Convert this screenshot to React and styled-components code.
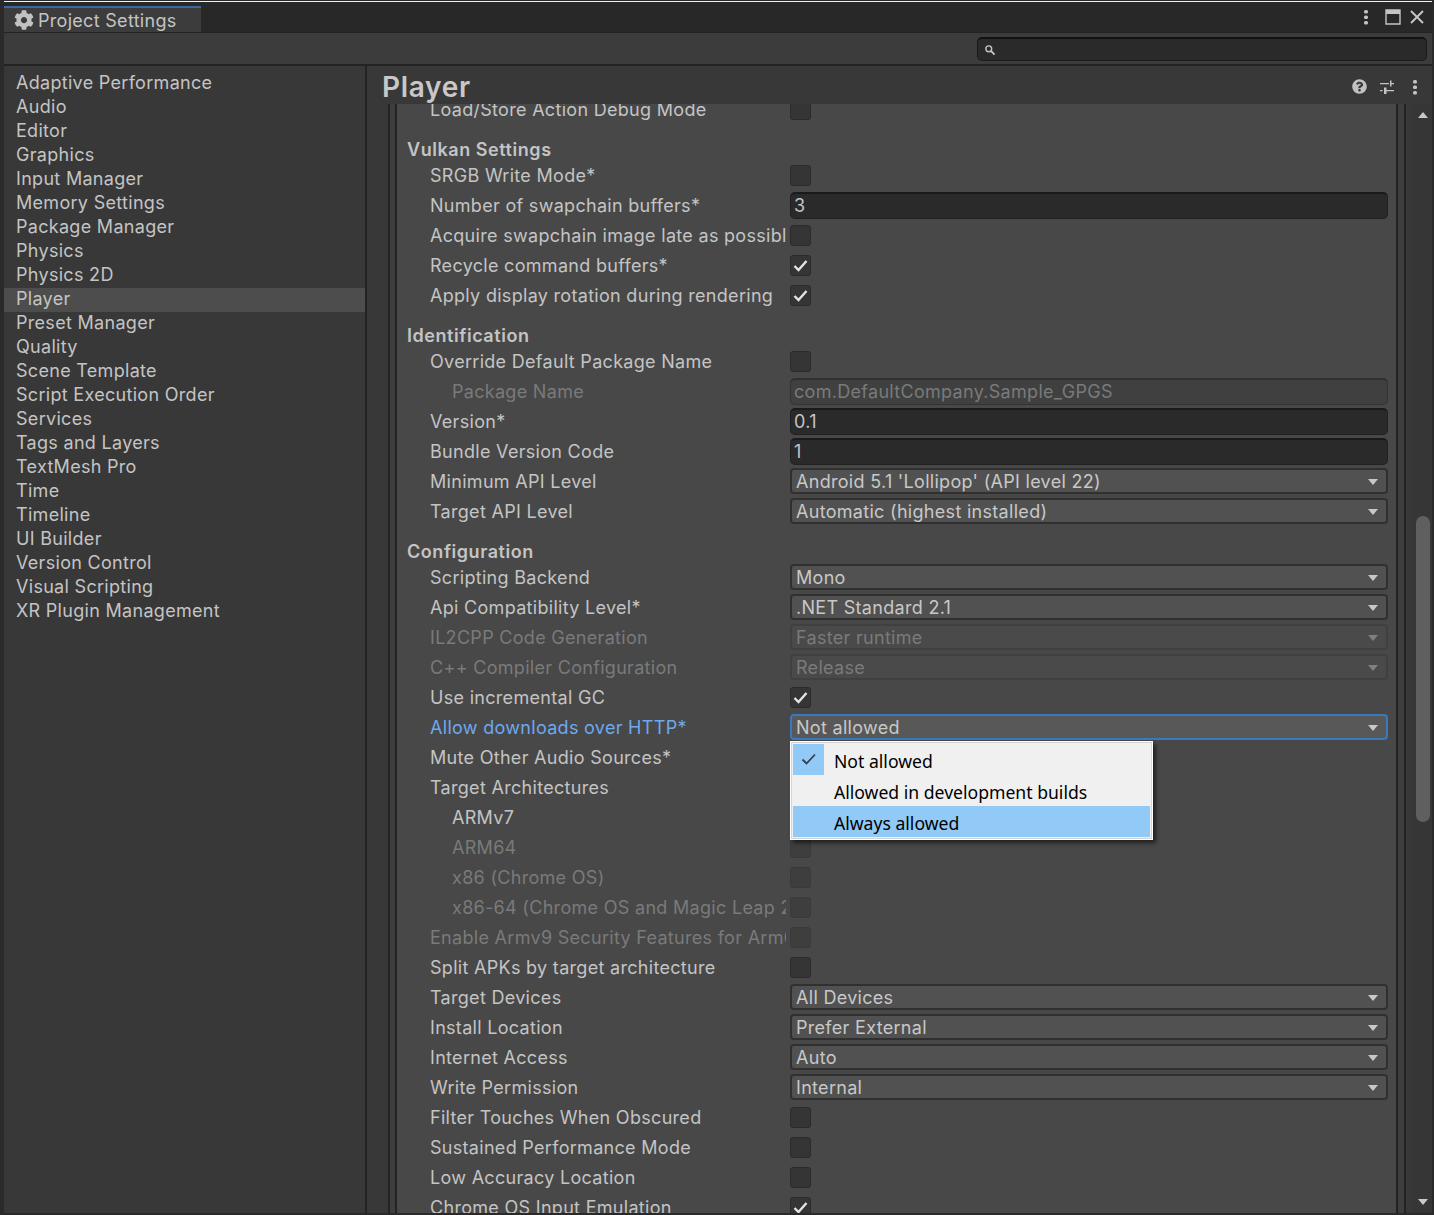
import React from "react";
import styled, { createGlobalStyle } from "styled-components";
import { FaCog, FaQuestionCircle } from "react-icons/fa";

const Global = createGlobalStyle`
  html, body { margin: 0; padding: 0; background: #2a2a2a; }
  body { font-family: Inter, "Liberation Sans", sans-serif; }
`;

const Page = styled.div`
  width: 1434px; height: 1215px; overflow: hidden; background: #2a2a2a;
  display: flex; flex-direction: column; padding: 1px 2px 2px 4px; box-sizing: border-box;
  color: #c4c4c4; font-size: 18px; letter-spacing: 0.3px;
`;
const TopLine = styled.div`height: 1px; background: #f4f4f4; flex: none;`;
const TabStrip = styled.div`
  height: 31px; flex: none; background: #282828; display: flex; align-items: flex-end;
  justify-content: space-between; border-bottom: 1px solid #232323; box-sizing: border-box;
`;
const Tab = styled.div`
  width: 197px; height: 26px; background: #3c3c3c; border-top: 2px solid #3a6a9e; box-sizing: border-box;
  display: flex; align-items: center; gap: 4px; padding: 0 0 0 10px; font-size: 18px; color: #c4c4c4;
  svg { flex: none; color: #c2c2c2; }
`;
const WinIcons = styled.div`
  display: flex; align-items: center; height: 30px; gap: 0; padding-right: 8px; align-self: flex-start;
`;
const Toolbar = styled.div`
  height: 33px; flex: none; background: #3c3c3c; border-bottom: 2px solid #232323; box-sizing: border-box;
  display: flex; justify-content: flex-end; align-items: flex-start; padding: 4px 5px 0 0;
`;
const Search = styled.div`
  width: 450px; height: 24px; box-sizing: border-box; background: #2a2a2a; border: 1px solid #1c1c1c; border-top: 2px solid #121212;
  border-radius: 5px; display: flex; align-items: center; padding-left: 6px;
`;
const Main = styled.div`flex: 1; min-height: 0; display: flex;`;
const Sidebar = styled.nav`
  width: 361px; flex: none; background: #383838; padding-top: 6px; border-right: 2px solid #232323;
`;
const SideItem = styled.div`
  height: 24px; line-height: 22px; padding-left: 12px;
  background: ${p => (p.$active ? "#4d4d4d" : "transparent")};
`;
const Content = styled.div`flex: 1; min-width: 0; display: flex; flex-direction: column; background: #383838;`;
const Header = styled.header`
  height: 38px; flex: none; display: flex; align-items: center; justify-content: space-between;
  padding: 3px 14px 0 15px; box-sizing: border-box; background: #383838; position: relative; z-index: 2;
`;
const Title = styled.h1`margin: 0; font-size: 28px; font-weight: 600; color: #c8c8c8; letter-spacing: 0.7px; line-height: 34px;`;
const HeadIcons = styled.div`display: flex; align-items: center; gap: 13px; color: #c2c2c2;`;
const Scroller = styled.div`flex: 1; min-height: 0; display: flex;`;
const Outer = styled.div`
  flex: 1; min-width: 0; overflow: hidden; display: flex; padding: 0 6px 0 21px; background: #383838;
`;
const Frame = styled.div`
  flex: 1; min-width: 0; background: #3e3e3e; border-left: 2px solid #232323; border-right: 2px solid #232323;
  padding: 0 6px 0 5px; display: flex;
`;
const Inner = styled.div`
  flex: 1; min-width: 0; background: #484848; border-left: 2px solid #232323; border-right: 2px solid #232323;
  overflow: hidden;
`;
const Stack = styled.div`margin-top: -10px; padding: 0 8px 0 10px;`;
const SectionTitle = styled.div`
  height: 21px; line-height: 21px; padding-top: 15px; font-weight: 600; color: #c4c4c4; letter-spacing: 0.55px;
`;
const Row = styled.div`height: 30px; display: flex; align-items: center; padding-left: 23px;`;
const Label = styled.div`
  width: 356px; flex: none; white-space: nowrap; overflow: hidden; box-sizing: border-box;
  padding-left: ${p => (p.$sub ? "22px" : "0")};
  color: ${p => (p.$dim ? "#7a7a7a" : p.$blue ? "#6da9ef" : "#c4c4c4")};
`;
const Control = styled.div`
  margin-left: 4px; flex: 1; min-width: 0; position: relative; display: flex; align-items: center;
`;
const Check = styled.div`
  width: 21px; height: 21px; box-sizing: border-box; border-radius: 3px; background: ${p => (p.$dim ? "#3e3e3e" : "#353535")};
  border: 1px solid ${p => (p.$dim ? "#3a3a3a" : "#2b2b2b")}; display: flex; align-items: center; justify-content: center;
`;
const Field = styled.div`
  flex: 1; height: 27px; box-sizing: border-box; border-radius: 5px; padding-left: 3px; line-height: 24px; white-space: nowrap;
  background: ${p => (p.$dim ? "#404040" : "#2a2a2a")};
  border: 1px solid ${p => (p.$dim ? "#333333" : "#212121")};
  border-top: 2px solid ${p => (p.$dim ? "#303030" : "#1a1a1a")};
  color: ${p => (p.$dim ? "#7a7a7a" : "#c4c4c4")};
`;
const Select = styled.div`
  flex: 1; height: 26px; box-sizing: border-box; border-radius: 4px; padding: 0 8px 0 4px; display: flex; align-items: center; justify-content: space-between;
  background: ${p => (p.$focus ? "#585858" : p.$dim ? "#4a4a4a" : "#515151")};
  border: 2px solid ${p => (p.$focus ? "#3a79bb" : p.$dim ? "#404040" : "#303030")};
  color: ${p => (p.$dim ? "#7a7a7a" : "#c8c8c8")};
`;
const Arrow = styled.span`
  margin-top: 2px; width: 0; height: 0; border-left: 5.5px solid transparent; border-right: 5.5px solid transparent;
  border-top: 6px solid ${p => (p.$dim ? "#7f7f7f" : "#c8c8c8")};
`;
const Menu = styled.div`
  position: absolute; left: 0; top: 27px; width: 363px; height: 99px; box-sizing: border-box; z-index: 5;
  background: #f0f0f0; border: 1px solid #ffffff; outline: 1px solid #d4d4d4; outline-offset: -2px;
  padding: 2px; box-shadow: 3px 3px 4px rgba(0,0,0,0.55);
  font-family: "Noto Sans", sans-serif; font-size: 17.6px; letter-spacing: 0; color: #000;
`;
const MenuItem = styled.div`
  height: 31px; display: flex; align-items: center; white-space: nowrap;
  background: ${p => (p.$hot ? "#91c9f7" : "transparent")};
`;
const MenuText = styled.span`padding-top: 3px;`;
const MenuMark = styled.div`
  width: 31px; height: 31px; flex: none; margin-right: 10px; display: flex; align-items: center; justify-content: center;
  background: ${p => (p.$on ? "#91c9f7" : "transparent")};
`;
const Bar = styled.div`
  width: 20px; flex: none; background: #363636; display: flex; flex-direction: column; align-items: flex-start; position: relative; z-index: 2;
`;
const Up = styled.span`
  margin: 8px 0 0 6px; width: 0; height: 0; border-left: 5px solid transparent; border-right: 5px solid transparent; border-bottom: 6px solid #c8c8c8;
`;
const Thumb = styled.div`margin: 398px 0 0 4px; width: 14px; height: 306px; border-radius: 7px; background: #5f5f5f;`;
const Down = styled.span`
  margin: auto 0 8px 6px; width: 0; height: 0; border-left: 5px solid transparent; border-right: 5px solid transparent; border-top: 6px solid #c8c8c8;
`;

const sideItems = ["Adaptive Performance","Audio","Editor","Graphics","Input Manager","Memory Settings","Package Manager","Physics","Physics 2D","Player","Preset Manager","Quality","Scene Template","Script Execution Order","Services","Tags and Layers","TextMesh Pro","Time","Timeline","UI Builder","Version Control","Visual Scripting","XR Plugin Management"];

const C = (label, on = false, o = {}) => ({ label, kind: "check", on, ...o });
const S = (label, value, o = {}) => ({ label, kind: "select", value, ...o });
const F = (label, value, o = {}) => ({ label, kind: "field", value, ...o });
const T = title => ({ title });

const rows = [
  C("Load/Store Action Debug Mode"),
  T("Vulkan Settings"),
  C("SRGB Write Mode*"),
  F("Number of swapchain buffers*", "3"),
  C("Acquire swapchain image late as possibl"),
  C("Recycle command buffers*", true),
  C("Apply display rotation during rendering", true),
  T("Identification"),
  C("Override Default Package Name"),
  F("Package Name", "com.DefaultCompany.Sample_GPGS", { sub: true, dim: true }),
  F("Version*", "0.1"),
  F("Bundle Version Code", "1"),
  S("Minimum API Level", "Android 5.1 'Lollipop' (API level 22)"),
  S("Target API Level", "Automatic (highest installed)"),
  T("Configuration"),
  S("Scripting Backend", "Mono"),
  S("Api Compatibility Level*", ".NET Standard 2.1"),
  S("IL2CPP Code Generation", "Faster runtime", { dim: true }),
  S("C++ Compiler Configuration", "Release", { dim: true }),
  C("Use incremental GC", true),
  S("Allow downloads over HTTP*", "Not allowed", { blue: true, focus: true, menu: true }),
  C("Mute Other Audio Sources*"),
  { label: "Target Architectures", kind: "none" },
  C("ARMv7", false, { sub: true }),
  C("ARM64", false, { sub: true, dim: true }),
  C("x86 (Chrome OS)", false, { sub: true, dim: true }),
  C("x86-64 (Chrome OS and Magic Leap 2", false, { sub: true, dim: true }),
  C("Enable Armv9 Security Features for Arm6", false, { dim: true }),
  C("Split APKs by target architecture"),
  S("Target Devices", "All Devices"),
  S("Install Location", "Prefer External"),
  S("Internet Access", "Auto"),
  S("Write Permission", "Internal"),
  C("Filter Touches When Obscured"),
  C("Sustained Performance Mode"),
  C("Low Accuracy Location"),
  C("Chrome OS Input Emulation", true),
];

const Tick = () => (
  <svg width="15" height="13" viewBox="0 0 15 13"><path d="M1.500 7 L5.500 11 L13.500 2" fill="none" stroke="#e4e4e4" strokeWidth="2.400" /></svg>
);
const Dots = ({ x = 0 }) => (
  <svg width="6" height="16" viewBox="0 0 6 16" style={{ marginLeft: x }} fill="#c4c4c4">
    <rect x="1" y="1" width="4" height="3.500" rx="1.500" /><rect x="1" y="6.500" width="4" height="3.500" rx="1.500" /><rect x="1" y="12" width="4" height="3.500" rx="1.500" />
  </svg>
);

function MenuBox() {
  return (
    <Menu>
      <MenuItem><MenuMark $on><svg width="16" height="13" viewBox="0 0 16 13"><path d="M1.500 6.500 L5.500 10.500 L14 1.500" fill="none" stroke="#33404d" strokeWidth="1.800" /></svg></MenuMark><MenuText>Not allowed</MenuText></MenuItem>
      <MenuItem><MenuMark /><MenuText>Allowed in development builds</MenuText></MenuItem>
      <MenuItem $hot><MenuMark /><MenuText>Always allowed</MenuText></MenuItem>
    </Menu>
  );
}

function SettingRow({ r }) {
  return (
    <Row>
      <Label $sub={r.sub} $dim={r.dim} $blue={r.blue}>{r.label}</Label>
      <Control>
        {r.kind === "check" && <Check $dim={r.dim}>{r.on && <Tick />}</Check>}
        {r.kind === "field" && <Field $dim={r.dim}>{r.value}</Field>}
        {r.kind === "select" && <Select $dim={r.dim} $focus={r.focus}>{r.value}<Arrow $dim={r.dim} /></Select>}
        {r.menu && <MenuBox />}
      </Control>
    </Row>
  );
}

export default function App() {
  return (
    <Page>
      <Global />
      <TopLine />
      <TabStrip>
        <Tab><FaCog size={20} />Project Settings</Tab>
        <WinIcons>
          <Dots />
          <svg width="16" height="16" viewBox="0 0 16 16" style={{ marginLeft: 16 }}>
            <path d="M1 1h14v14H1z" fill="none" stroke="#c4c4c4" strokeWidth="1.400" /><path d="M1 1h14v4H1z" fill="#c4c4c4" />
          </svg>
          <svg width="14" height="14" viewBox="0 0 14 14" style={{ marginLeft: 9 }}>
            <path d="M1 1l12 12M13 1L1 13" stroke="#c8c8c8" strokeWidth="1.800" fill="none" />
          </svg>
        </WinIcons>
      </TabStrip>
      <Toolbar>
        <Search>
          <svg width="12" height="12" viewBox="0 0 12 12"><circle cx="4.800" cy="4.800" r="2.900" fill="none" stroke="#c4c4c4" strokeWidth="1.400" /><path d="M7 7l3.600 3.600" stroke="#c4c4c4" strokeWidth="1.800" /></svg>
        </Search>
      </Toolbar>
      <Main>
        <Sidebar>
          {sideItems.map(s => <SideItem key={s} $active={s === "Player"}>{s}</SideItem>)}
        </Sidebar>
        <Content>
          <Header>
            <Title>Player</Title>
            <HeadIcons>
              <FaQuestionCircle size={15} />
              <svg width="14" height="14" viewBox="0 0 14 14" fill="#c4c4c4">
                <path d="M0 3h9v1.200H0z M10 .5h1.500v6H10z M11.500 3H14v1.200h-2.500z M0 10h2.500v1.200H0z M4 7.500h2.500V14H4z M6.500 10H14v1.200H6.500z" />
              </svg>
              <Dots x={5} />
            </HeadIcons>
          </Header>
          <Scroller>
            <Outer>
              <Frame>
                <Inner>
                  <Stack>
                    {rows.map((r, i) => r.title
                      ? <SectionTitle key={i}>{r.title}</SectionTitle>
                      : <SettingRow key={i} r={r} />)}
                  </Stack>
                </Inner>
              </Frame>
            </Outer>
            <Bar><Up /><Thumb /><Down /></Bar>
          </Scroller>
        </Content>
      </Main>
    </Page>
  );
}
